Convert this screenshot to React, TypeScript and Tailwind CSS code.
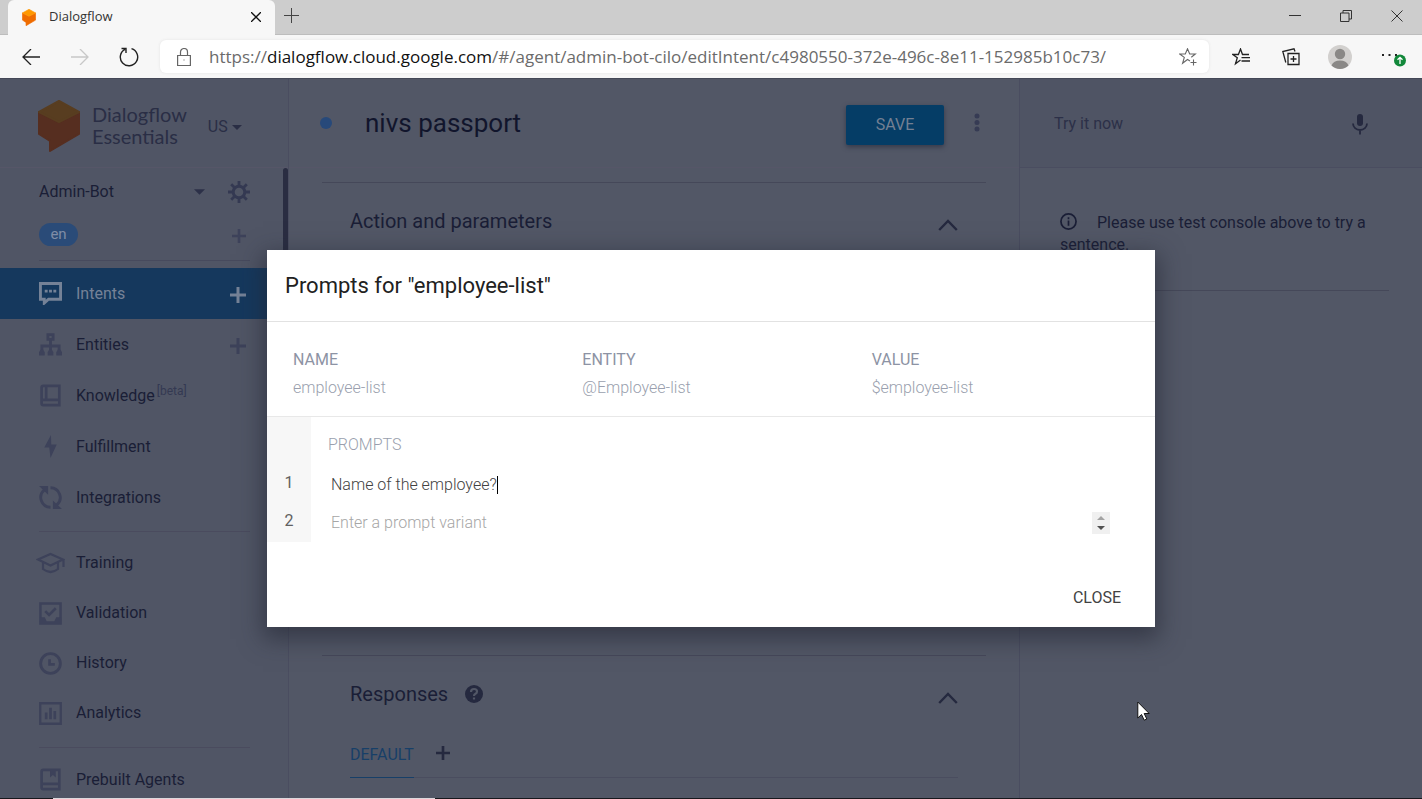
import { useState } from 'react';
import type { ReactNode } from 'react';

interface NavItem {
    label: string;
    icon: ReactNode;
    tag?: string;
    active?: boolean;
    addable?: boolean;
}

function Plus({ className }: { className?: string }) {
    return (
        <svg viewBox="0 0 16 16" className={className} fill="none" stroke="currentColor" strokeWidth="3" aria-hidden="true">
            <path d="M8 0v16M0 8h16" />
        </svg>
    );
}

function Caret({ className }: { className?: string }) {
    return (
        <svg viewBox="0 0 10 5" className={className} fill="currentColor" aria-hidden="true">
            <path d="M0 0h10L5 5z" />
        </svg>
    );
}

function ChevronUp() {
    return (
        <svg viewBox="0 0 20 12" className="w-5 h-3 text-[#25293f]" fill="none" stroke="currentColor" strokeWidth="2.4" aria-hidden="true">
            <path d="M1.2 11 10 2l8.800 9" />
        </svg>
    );
}

function NavIcon({ children, wide }: { children: ReactNode; wide?: boolean }) {
    return (
        <svg
            viewBox={wide ? '0 0 29 24' : '0 0 24 24'}
            className={wide ? 'w-[29px] h-6 -mx-[3px]' : 'w-[23px] h-[23px]'}
            fill="none"
            stroke="currentColor"
            strokeWidth="2.400"
            aria-hidden="true"
        >
            {children}
        </svg>
    );
}

const mainNav: NavItem[] = [
    {
        label: 'Intents',
        active: true,
        addable: true,
        icon: (
            <NavIcon>
                <path d="M1.500 1.500h21v16.500H10l-4.500 4V18h-4z" strokeWidth="3" />
                <path d="M6 9.500h3M10.500 9.500h3M15 9.500h3" strokeWidth="3" />
            </NavIcon>
        ),
    },
    {
        label: 'Entities',
        addable: true,
        icon: (
            <NavIcon>
                <path d="M9.300 1.700h5.400v5H9.300zM12 7.500v11M3 18v-4.500h18V18" strokeWidth="3" />
                <path d="M0 23.500V20l1.500-2.500h3L6 20v3.500zM9 23.500V20l1.500-2.500h3L15 20v3.500zM18 23.500V20l1.500-2.500h3L24 20v3.500z" fill="currentColor" stroke="none" />
            </NavIcon>
        ),
    },
    {
        label: 'Knowledge',
        tag: '[beta]',
        icon: (
            <NavIcon>
                <path d="M21.200 16.500V2H4.500Q2.700 2 2.700 4v16Q2.700 22 4.500 22h16.700v-5.500H2.700M7.500 2v14" strokeWidth="2.800" />
            </NavIcon>
        ),
    },
    {
        label: 'Fulfillment',
        icon: (
            <NavIcon>
                <path d="M12.500 0 5.500 13h5.200L12 24l6.500-14h-5.700z" fill="currentColor" stroke="none" />
            </NavIcon>
        ),
    },
    {
        label: 'Integrations',
        icon: (
            <NavIcon>
                <path d="M12 1.800a10.200 10.200 0 0 1 6.500 18M12 22.200a10.200 10.200 0 0 1-6.500-18" strokeWidth="3" />
                <path d="M0 0h9.500v9zM24 24h-9.500v-9z" fill="currentColor" stroke="none" />
            </NavIcon>
        ),
    },
];

const toolsNav: NavItem[] = [
    {
        label: 'Training',
        icon: (
            <NavIcon wide>
                <path d="M2 8.500 14.500 3 27 8.500l-12.500 6zM7 11v7q7.500 6 15 0v-7M27.500 8.500V16" strokeWidth="2.200" />
            </NavIcon>
        ),
    },
    {
        label: 'Validation',
        icon: (
            <NavIcon>
                <path d="M1.500 1.500h21v21h-21z" strokeWidth="2.600" />
                <path d="m6.500 9.500 4 4 7-7" strokeWidth="2.800" />
                <path d="M1 16h5l2 4h8l2-4h5v7H1z" fill="currentColor" stroke="none" />
            </NavIcon>
        ),
    },
    {
        label: 'History',
        icon: (
            <NavIcon>
                <circle cx="12" cy="12" r="10.300" strokeWidth="3" />
                <path d="M11 7.500v5.500h5.500" strokeWidth="2.800" />
            </NavIcon>
        ),
    },
    {
        label: 'Analytics',
        icon: (
            <NavIcon>
                <path d="M1.300 1.300h21.400v21.400H1.300z" />
                <path d="M7.500 18v-7M12 18V6M16.500 18V9.500" strokeWidth="2.800" />
            </NavIcon>
        ),
    },
];

const agentsNav: NavItem[] = [
    {
        label: 'Prebuilt Agents',
        icon: (
            <NavIcon>
                <path d="M21.200 16.500V2H4.500Q2.700 2 2.700 4v16Q2.700 22 4.500 22h16.700v-5.500H2.700" strokeWidth="2.800" />
                <path d="M11.500 2h6v8l-3-2.700-3 2.700z" fill="currentColor" stroke="none" />
            </NavIcon>
        ),
    },
];

function NavList({ items, rowClass }: { items: NavItem[]; rowClass: string }) {
    return (
        <ul>
            {items.map((item) => (
                <li
                    key={item.label}
                    className={`flex items-center pl-[39px] pr-[42px] ${rowClass} ${
                        item.active ? 'bg-[#15385d] text-[#758297]' : 'text-[#3d425a]'
                    }`}
                >
                    <a href="#" className="flex flex-1 items-center gap-[14px]">
                        {item.icon}
                        <span className={item.active ? '' : 'text-[#1a1e36]'}>
                            {item.label}
                            {item.tag && <sup className="ml-[2px] text-xs text-[#343952]">{item.tag}</sup>}
                        </span>
                    </a>
                    {item.addable && (
                        <button aria-label={`Create ${item.label}`}>
                            <Plus className="w-4 h-4 mt-0.5" />
                        </button>
                    )}
                </li>
            ))}
        </ul>
    );
}

function Logo({ className, top, left }: { className: string; top: string; left: string }) {
    return (
        <svg viewBox="0 0 42 52" className={className} aria-hidden="true" strokeLinejoin="round" strokeWidth="2">
            <path d="M1 12 21 22l20-10v22L12 51V41L1 34z" fill={left} stroke={left} />
            <path d="M1 12 21 1l20 11-20 10z" fill={top} stroke={top} />
        </svg>
    );
}

function BrowserChrome() {
    return (
        <header className="shrink-0 font-['Open_Sans',sans-serif]">
            <div className="flex h-[35px] items-end justify-between border-b border-[#bdbdbd] bg-[#cdcdcd]">
                <div className="flex h-[35px] items-center">
                    <div className="-mb-px ml-2 flex h-[35px] w-[267px] items-center rounded-t-md bg-[#f7f7f7] pl-[14px] pr-3 text-[#333]">
                        <Logo className="w-[14px] h-[17px]" top="#ff9800" left="#ef6c00" />
                        <span className="ml-[13px] flex-1 text-[13px]">Dialogflow</span>
                        <button aria-label="Close tab" className="p-0.5">
                            <svg viewBox="0 0 10 10" className="w-[10px] h-[10px]" stroke="#111" strokeWidth="1.300">
                                <path d="m0 0 10 10M10 0 0 10" />
                            </svg>
                        </button>
                    </div>
                    <button aria-label="New tab" className="ml-[9px] -mt-0.5">
                        <svg viewBox="0 0 15 15" className="w-[15px] h-[15px]" stroke="#444">
                            <path d="M7.500 0v15M0 7.500h15" />
                        </svg>
                    </button>
                </div>
                <div className="flex h-[34px] items-center gap-[39px] pb-0.5 pr-[19px] text-[#333]">
                    <button aria-label="Minimize">
                        <svg viewBox="0 0 12 12" className="w-3 h-3" stroke="currentColor">
                            <path d="M0 5.500h12" />
                        </svg>
                    </button>
                    <button aria-label="Restore">
                        <svg viewBox="0 0 12 12" className="w-3 h-3" fill="none" stroke="currentColor">
                            <path d="M.5 3h8.500v8.500H.5zM3 3V.5h8.500V9H9" />
                        </svg>
                    </button>
                    <button aria-label="Close window">
                        <svg viewBox="0 0 12 12" className="w-3 h-3" stroke="currentColor">
                            <path d="m.5.5 11 11M11.500.5l-11 11" />
                        </svg>
                    </button>
                </div>
            </div>
            <div className="flex h-[43px] items-center bg-[#f7f7f7] pl-[22px] pr-[14px] text-[#222]">
                <button aria-label="Back">
                    <svg viewBox="0 0 18 16" className="w-[18px] h-4" fill="none" stroke="currentColor" strokeWidth="1.300">
                        <path d="M18 8H1M9 0 1 8l8 8" />
                    </svg>
                </button>
                <button aria-label="Forward" className="ml-[31px] text-[#c8c8c8]" disabled>
                    <svg viewBox="0 0 18 16" className="w-[18px] h-4" fill="none" stroke="currentColor" strokeWidth="1.300">
                        <path d="M0 8h17M9 0l8 8-8 8" />
                    </svg>
                </button>
                <button aria-label="Refresh" className="ml-[30px]">
                    <svg viewBox="0 0 20 20" className="w-5 h-5" fill="none" stroke="currentColor" strokeWidth="1.400">
                        <path d="M12.500 1.700a8.700 8.700 0 1 1-6.500.6M2.500 1.500h4.500V6" />
                    </svg>
                </button>
                <div className="ml-[21px] flex h-[33px] flex-1 items-center rounded-md bg-white pl-[17px] pr-3 text-[17px] shadow-[0_0_3px_#e2e2e2]">
                    <svg viewBox="0 0 14 18" className="w-[14px] h-[18px]" fill="none" stroke="#666" strokeWidth="1.200" aria-hidden="true">
                        <path d="M.6 7.500h12.800v10H.6zM3.500 7.500V4a3.500 3.500 0 0 1 7 0v3.500" />
                        <path d="M6.500 11.500h1v1h-1z" fill="#666" stroke="none" />
                    </svg>
                    <div role="textbox" aria-label="Address" className="ml-[18px] flex-1 whitespace-nowrap text-[#6b6b6b]">
                        https://<span className="text-[#111]">dialogflow.cloud.google.com</span>
                        /#/agent/admin-bot-cilo/editIntent/c4980550-372e-496c-8e11-152985b10c73/
                    </div>
                    <button aria-label="Add to favorites" className="text-[#666]">
                        <svg viewBox="0 0 18 18" className="w-[18px] h-[18px]" fill="none" stroke="currentColor" strokeWidth="1.100">
                            <path d="M11 13 8.500 11.500 3.600 15.200l1.700-5.800L.7 6h5.600L8.500.8 10.700 6h5.600l-4 3.200M14.500 11.500v6M11.500 14.500h6" />
                        </svg>
                    </button>
                </div>
                <div className="ml-[23px] flex items-center gap-8">
                    <button aria-label="Favorites">
                        <svg viewBox="0 0 18 18" className="w-[18px] h-[18px]" fill="none" stroke="currentColor" strokeWidth="1.300">
                            <path d="M8.500 12 3.500 15.800l1.800-6L.8 6.500h5.600L8.500 1l2 5.500H17M9.500 9.700H18M9.500 13H18" />
                        </svg>
                    </button>
                    <button aria-label="Collections">
                        <svg viewBox="0 0 18 18" className="w-[18px] h-[18px]" fill="none" stroke="currentColor" strokeWidth="1.300">
                            <path d="M6 5.500h11v11H6zM11.500 8v6M8.500 11h6M3.800 14.500.8 3.500 12 .8l1 2.700" />
                        </svg>
                    </button>
                    <button aria-label="Profile" className="-mx-1">
                        <svg viewBox="0 0 24 24" className="w-6 h-6">
                            <circle cx="12" cy="12" r="12" fill="#d2d0ce" />
                            <circle cx="12" cy="9" r="5.200" fill="#8a8886" />
                            <path d="M3.500 20.500q2-5 8.500-5t8.500 5A12 12 0 0 1 12 24a12 12 0 0 1-8.500-3.500z" fill="#8a8886" />
                        </svg>
                    </button>
                    <button aria-label="Settings and more">
                        <svg viewBox="0 0 28 20" className="w-7 h-5">
                            <path d="M2 7h2v2H2zM8.500 7h2v2h-2zM15 7h2v2h-2z" fill="#222" />
                            <circle cx="20" cy="13.500" r="6" fill="#12883a" />
                            <path d="M20 17v-6.500M17.500 12.700l2.500-2.400 2.500 2.400" fill="none" stroke="#fff" strokeWidth="1.300" />
                        </svg>
                    </button>
                </div>
            </div>
        </header>
    );
}

function Sidebar() {
    return (
        <aside className="relative w-[289px] shrink-0 overflow-hidden border-r border-[#4a4d60] bg-[#505565]">
            <div className="flex h-[89px] items-center border-b border-[#565668] pl-[38px]">
                <Logo className="w-[42px] h-[52px] mt-1.5" top="#583d20" left="#562e20" />
                <div className="ml-3 mt-1 font-['Lato',sans-serif] text-xl/[22px] text-[#2a2e45]">
                    Dialogflow
                    <br />
                    Essentials
                </div>
                <button className="ml-[21px] mt-2 flex items-center gap-1 text-[#2a2e45]">
                    US
                    <Caret className="w-[10px] h-[5px]" />
                </button>
            </div>
            <div className="absolute right-0 top-[89px] h-[380px] w-[5px] rounded-sm bg-[#2a2d42]" />

            <div className="flex h-12 items-center pl-[39px] pr-[38px] text-[#343952]">
                <button className="flex flex-1 items-center justify-between text-[#1a1e36]">
                    Admin-Bot
                    <Caret className="mr-[23px] w-[11px] h-[6px] text-[#2c3048]" />
                </button>
                <button aria-label="Agent settings">
                    <svg viewBox="0 0 22 22" className="w-[22px] h-[22px]" fill="none" stroke="currentColor">
                        <circle cx="11" cy="11" r="5.800" strokeWidth="3" />
                        <path d="M11 0v4M11 18v4M0 11h4M18 11h4M3.200 3.200l3 3M15.800 15.800l3 3M18.800 3.200l-3 3M6.200 15.800l-3 3" strokeWidth="2.800" />
                    </svg>
                </button>
            </div>
            <div className="flex h-9 items-center justify-between pl-[39px] pr-[42px] text-[#3d425a]">
                <button className="h-[23px] w-[39px] rounded-full bg-[#2a4b78] text-[15px]/[22px] text-[#7f8da6]">en</button>
                <button aria-label="Add language">
                    <Plus className="w-[14px] h-[14px] mt-1" />
                </button>
            </div>
            <hr className="ml-[39px] mr-[38px] mt-2 mb-[7px] border-[#474a5d]" />

            <nav aria-label="Agent">
                <NavList items={mainNav} rowClass="h-[51px]" />
                <hr className="ml-[39px] mr-[38px] mt-2 mb-[6px] border-[#4a4b5e]" />
                <NavList items={toolsNav} rowClass="h-[50px]" />
                <hr className="ml-[39px] mr-[38px] mt-[9px] mb-[6px] border-[#4a4b5e]" />
                <NavList items={agentsNav} rowClass="h-[51px]" />
            </nav>
        </aside>
    );
}

function IntentEditor() {
    return (
        <main className="flex min-w-0 flex-1 flex-col border-r border-[#4a4d60] text-[#1a1e36]">
            <div className="flex h-[89px] shrink-0 items-center border-b border-[#565668] pl-[31px] pr-[39px]">
                <span className="h-3 w-3 rounded-full bg-[#27497a]" />
                <h1 className="ml-[33px] flex-1 text-[26px] text-[#11152c]">nivs passport</h1>
                <button className="mt-1 h-10 w-[98px] rounded-xs bg-[#053d66] text-[#738093] shadow-[0_2px_5px_#35394a]">SAVE</button>
                <button aria-label="More actions" className="ml-[30px] text-[#363b54]">
                    <svg viewBox="0 0 6 20" className="w-[6px] h-5" fill="currentColor">
                        <circle cx="3" cy="3" r="2.500" />
                        <circle cx="3" cy="9.500" r="2.500" />
                        <circle cx="3" cy="16" r="2.500" />
                    </svg>
                </button>
            </div>
            <div className="px-[33px]">
                <section className="mt-[14px] h-[473px] border-t border-[#454859] px-7 pt-6">
                    <div className="flex items-center justify-between">
                        <h2 className="text-xl/7">Action and parameters</h2>
                        <button aria-label="Collapse action and parameters" className="mt-2">
                            <ChevronUp />
                        </button>
                    </div>
                </section>
                <section className="border-t border-[#454859] px-7 pt-6">
                    <div className="flex items-center">
                        <h2 className="text-xl/7">Responses</h2>
                        <svg viewBox="0 0 18 18" className="ml-[17px] w-[18px] h-[18px]" aria-hidden="true">
                            <circle cx="9" cy="9" r="9" fill="#25293f" />
                            <path d="M6 7q0-3 3-3t3 2.500q0 1.500-1.500 2.300-1.500.8-1.500 2.200M9 12.500v2" fill="none" stroke="#525766" strokeWidth="2.200" />
                        </svg>
                        <button aria-label="Collapse responses" className="ml-auto mt-2">
                            <ChevronUp />
                        </button>
                    </div>
                    <div className="mt-6 flex items-start gap-[22px] border-b border-[#4a4d5f]">
                        <button className="-mb-px h-[46px] border-b border-[#173f68] text-[#173f68]">DEFAULT</button>
                        <button aria-label="Add response tab" className="mt-[14px] text-[#25293f]">
                            <Plus className="w-[14px] h-[14px]" />
                        </button>
                    </div>
                </section>
            </div>
        </main>
    );
}

function TestConsole() {
    return (
        <aside className="w-[402px] shrink-0 text-[#1a1e36]">
            <div className="flex h-[89px] items-center border-b border-[#4a4d60] bg-[#4f5464] pt-0.5 pl-[34px] pr-[54px]">
                <input aria-label="Try it now" placeholder="Try it now" className="min-w-0 flex-1 outline-none placeholder:text-[#2c3048]" />
                <button aria-label="Speak" className="text-[#25293f]">
                    <svg viewBox="0 0 16 22" className="w-4 h-[22px]" fill="none" stroke="currentColor" strokeWidth="1.800">
                        <rect x="5" y="1" width="6" height="12" rx="3" fill="currentColor" stroke="none" />
                        <path d="M1 10.500a7 6.500 0 0 0 14 0M8 17v4.500" />
                    </svg>
                </button>
            </div>
            <div className="mx-[33px] border-b border-[#454859] pl-[7px] pt-11 pb-[34px]">
                <p className="leading-[22px]">
                    <svg viewBox="0 0 18 18" className="mr-5 inline w-[17px] h-[17px] -mt-1" fill="none" stroke="currentColor" strokeWidth="1.800" aria-hidden="true">
                        <circle cx="9" cy="9" r="8" />
                        <path d="M9 8v5.500M9 4.500v2" />
                    </svg>
                    Please use test console above to try a sentence.
                </p>
            </div>
        </aside>
    );
}

function PromptsDialog() {
    const [prompt, setPrompt] = useState<string>('Name of the employee?');

    return (
        <div
            role="dialog"
            aria-labelledby="prompts-title"
            className="w-[888px] max-w-full bg-white shadow-[0_8px_22px_4px_rgba(35,38,52,0.6)]"
        >
            <h2 id="prompts-title" className="flex h-[72px] items-center border-b border-[#e2e2e2] pl-[18px] text-[22px] text-[#212121]">
                Prompts for "employee-list"
            </h2>
            <div className="border-b border-[#e8e8e8] px-[10px] pt-6 pb-[14px]">
                <table className="w-full table-fixed text-left text-[#9a9fae]">
                    <thead>
                        <tr className="h-7 text-[#8d93a4]">
                            <th className="pl-4 font-normal">NAME</th>
                            <th className="pl-4 font-normal">ENTITY</th>
                            <th className="pl-4 font-normal">VALUE</th>
                        </tr>
                    </thead>
                    <tbody>
                        <tr className="h-7 font-light">
                            <td className="pl-4">employee-list</td>
                            <td className="pl-4">@Employee-list</td>
                            <td className="pl-4">$employee-list</td>
                        </tr>
                    </tbody>
                </table>
            </div>
            <div className="flex">
                <ol className="w-11 bg-[#f7f7f7] pt-[47px] pb-[2px] text-center leading-[38px] text-[#616161]">
                    <li>1</li>
                    <li>2</li>
                </ol>
                <div className="flex-1 pl-[17px] pr-[45px] font-light">
                    <h3 className="pt-2 pb-px leading-[40px] text-[#9a9fae]">PROMPTS</h3>
                    <div className="flex h-[38px] items-center pl-[3px]">
                        <input
                            aria-label="Prompt 1"
                            value={prompt}
                            onChange={(e) => setPrompt(e.target.value)}
                            className="field-sizing-content text-[#424242] caret-transparent outline-none"
                        />
                        <span className="h-[18px] w-px bg-black" />
                    </div>
                    <div className="flex h-[38px] items-center pl-[3px]">
                        <input
                            aria-label="Prompt 2"
                            placeholder="Enter a prompt variant"
                            className="min-w-0 flex-1 outline-none placeholder:text-[#a6a6a6]"
                        />
                        <svg viewBox="0 0 18 22" className="w-[18px] h-[22px] bg-[#f0f0f0]" aria-hidden="true">
                            <path d="M5 8h8L9 4z" fill="#a3a3a3" />
                            <path d="M5 14h8l-4 4z" fill="#505050" />
                        </svg>
                    </div>
                </div>
            </div>
            <div className="flex justify-end pt-[37px] pr-[34px] pb-[10px]">
                <button className="h-[38px] text-[#424242]">CLOSE</button>
            </div>
        </div>
    );
}

export default function App() {
    return (
        <div className="flex h-screen flex-col overflow-hidden bg-[#525766] font-['Roboto',sans-serif] text-base">
            <BrowserChrome />
            <div className="relative flex min-h-0 flex-1 border-t border-[#444857]">
                <Sidebar />
                <IntentEditor />
                <TestConsole />
                <div className="absolute inset-0 flex items-center justify-center">
                    <PromptsDialog />
                </div>
                {/* Mouse pointer */}
                <svg viewBox="0 0 13 20" className="absolute left-[1137px] top-[622px] w-[13px] h-5" fill="#fff" stroke="#111" aria-hidden="true">
                    <path d="M.8 1v16l3.700-3.500 2.700 5.700 2.600-1.200-2.600-5.500h5z" />
                </svg>
            </div>
            {/* Edge of the taskbar */}
            <div className="flex h-px shrink-0 bg-[#17181c]">
                <span className="ml-[53px] w-[382px] bg-[#dcd8dc]" />
            </div>
        </div>
    );
}
